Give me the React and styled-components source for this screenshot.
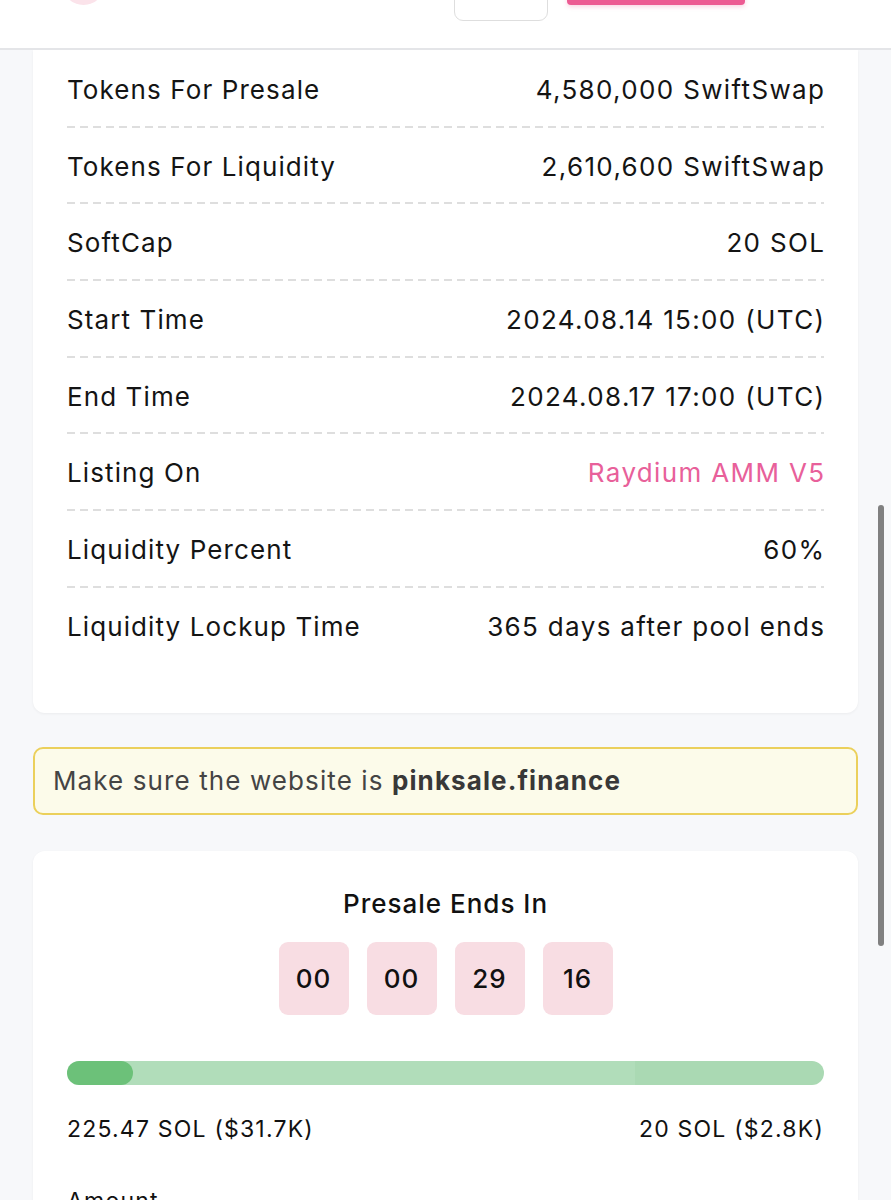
import React from "react";
import styled, { createGlobalStyle } from "styled-components";

const GlobalStyle = createGlobalStyle`
  html, body {
    margin: 0;
    padding: 0;
    background: #f7f8fa;
    font-family: "Inter", "Noto Sans", sans-serif;
    color: #111;
  }
`;

const details = [
  { label: "Tokens For Presale", value: "4,580,000 SwiftSwap" },
  { label: "Tokens For Liquidity", value: "2,610,600 SwiftSwap" },
  { label: "SoftCap", value: "20 SOL" },
  { label: "Start Time", value: "2024.08.14 15:00 (UTC)" },
  { label: "End Time", value: "2024.08.17 17:00 (UTC)" },
  { label: "Listing On", value: "Raydium AMM V5", link: true },
  { label: "Liquidity Percent", value: "60%" },
  { label: "Liquidity Lockup Time", value: "365 days after pool ends" },
];

const countdown = ["00", "00", "29", "16"];

const App = () => {
  return (
    <>
      <GlobalStyle />
      <Page>
        <Header>
          <Avatar />
          <HeaderActions>
            <GhostButton />
            <PinkButton />
          </HeaderActions>
        </Header>

        <Content>
          <DetailsCard>
            {details.map((row) => (
              <Row key={row.label}>
                <Label>{row.label}</Label>
                <Value $link={row.link}>{row.value}</Value>
              </Row>
            ))}
          </DetailsCard>

          <Warning>
            Make sure the website is <b>pinksale.finance</b>
          </Warning>

          <SaleCard>
            <SaleTitle>Presale Ends In</SaleTitle>
            <Countdown>
              {countdown.map((n, i) => (
                <TimeBox key={i}>{n}</TimeBox>
              ))}
            </Countdown>
            <Progress>
              <ProgressShade style={{ width: "75%" }} />
              <ProgressFill style={{ width: "8.7%" }} />
            </Progress>
            <ProgressLabels>
              <span>225.47 SOL ($31.7K)</span>
              <span>20 SOL ($2.8K)</span>
            </ProgressLabels>
            <FieldLabel>Amount</FieldLabel>
          </SaleCard>
        </Content>

        <ScrollThumb />
      </Page>
    </>
  );
};

export default App;

const Page = styled.div`
  width: 891px;
  height: 1200px;
  overflow: hidden;
  position: relative;
  background: #f7f8fa;
`;

const Header = styled.header`
  height: 48px;
  background: #fff;
  border-bottom: 2px solid #e4e5e8;
  display: flex;
  justify-content: space-between;
  position: relative;
  overflow: hidden;
`;

const Avatar = styled.div`
  width: 43px;
  height: 43px;
  border-radius: 50%;
  background: #fbe3ea;
  margin: -38px 0 0 62px;
`;

const HeaderActions = styled.div`
  display: flex;
  align-items: flex-start;
  gap: 19px;
  margin-right: 146px;
`;

const GhostButton = styled.div`
  width: 92px;
  height: 40px;
  margin-top: -21px;
  border: 1.5px solid #dedede;
  border-radius: 9px;
  background: #fff;
`;

const PinkButton = styled.div`
  width: 178px;
  height: 40px;
  margin-top: -35px;
  border-radius: 4px;
  background: #ec5b93;
  box-shadow: 0 2px 4px rgba(236, 91, 147, 0.25);
`;

const Content = styled.main`
  padding: 0 33px;
  display: flex;
  flex-direction: column;
`;

const Card = styled.section`
  background: #fff;
  border-radius: 12px;
  box-shadow: 0 1px 3px rgba(0, 0, 0, 0.05);
`;

const DetailsCard = styled(Card)`
  border-radius: 0 0 12px 12px;
  padding: 1px 34px 48px;
`;

const Row = styled.div`
  height: 76.7px;
  display: flex;
  align-items: center;
  justify-content: space-between;
  font-size: 26px;
  letter-spacing: 1.1px;
  position: relative;

  &:not(:last-child)::after {
    content: "";
    position: absolute;
    left: 0;
    right: 0;
    bottom: 0;
    height: 2px;
    background: repeating-linear-gradient(
      90deg,
      #dedede 0 8px,
      transparent 8px 13px
    );
  }
`;

const Label = styled.span`
  color: #141414;
`;

const Value = styled.span`
  color: ${(p) => (p.$link ? "#e8609a" : "#141414")};
  letter-spacing: 1.35px;
  margin-right: -1.35px;
`;

const Warning = styled.div`
  margin-top: 34px;
  height: 64px;
  display: flex;
  align-items: center;
  padding: 0 18px;
  border: 2px solid #ebd05b;
  border-radius: 10px;
  background: #fcfbea;
  font-size: 26px;
  letter-spacing: 1.1px;
  color: #444;
  white-space: pre;

  b {
    font-weight: 700;
    color: #383838;
  }
`;

const SaleCard = styled(Card)`
  margin-top: 36px;
  padding: 38px 34px 40px;
  display: flex;
  flex-direction: column;
  align-items: center;
`;

const SaleTitle = styled.h2`
  margin: 0;
  font-size: 26px;
  font-weight: 500;
  letter-spacing: 1px;
  line-height: 30px;
  color: #111;
`;

const Countdown = styled.div`
  display: flex;
  gap: 18px;
  margin-top: 23px;
`;

const TimeBox = styled.div`
  min-width: 38px;
  padding: 0 16px;
  height: 73px;
  border-radius: 9px;
  background: #f8dde3;
  display: flex;
  align-items: center;
  justify-content: center;
  font-size: 26px;
  font-weight: 500;
  letter-spacing: 1px;
  color: #111;
`;

const Progress = styled.div`
  position: relative;
  align-self: stretch;
  height: 24px;
  margin-top: 46px;
  border-radius: 12px;
  background: #aad9b3;
  overflow: hidden;
`;

const ProgressShade = styled.div`
  position: absolute;
  left: 0;
  top: 0;
  bottom: 0;
  background: #b1ddba;
`;

const ProgressFill = styled.div`
  position: absolute;
  left: 0;
  top: 0;
  bottom: 0;
  border-radius: 12px;
  background: #6cc179;
`;

const ProgressLabels = styled.div`
  align-self: stretch;
  display: flex;
  justify-content: space-between;
  margin-top: 30px;
  font-size: 23px;
  letter-spacing: 1.2px;
  color: #111;
`;

const FieldLabel = styled.div`
  align-self: flex-start;
  margin-top: 44px;
  font-size: 23px;
  letter-spacing: 1.2px;
  color: #111;
`;

const ScrollThumb = styled.div`
  position: absolute;
  left: 878px;
  top: 505px;
  width: 6px;
  height: 441px;
  border-radius: 3px;
  background: #808080;
`;
